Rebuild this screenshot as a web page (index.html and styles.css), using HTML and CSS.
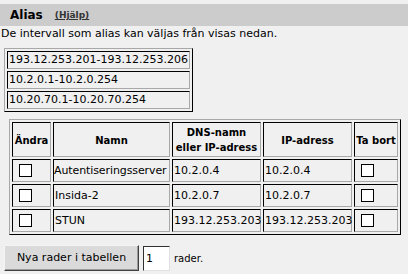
FILE: index.html
```html
<!DOCTYPE html>
<html lang="sv">
<head>
<meta charset="utf-8">
<title>Alias</title>
<link rel="stylesheet" href="styles.css">
</head>
<body>
<div class="titlebar"><span class="title">Alias</span><a class="help" href="#">(Hjälp)</a></div>
<p class="intro">De intervall som alias kan väljas från visas nedan.</p>
<table class="grid ranges">
<tr><td>193.12.253.201-193.12.253.206</td></tr>
<tr><td>10.2.0.1-10.2.0.254</td></tr>
<tr><td>10.20.70.1-10.20.70.254</td></tr>
</table>
<table class="grid aliases">
<colgroup>
<col class="c-edit"><col class="c-name"><col class="c-dns"><col class="c-ip"><col class="c-del">
</colgroup>
<tr>
<th>Ändra</th>
<th>Namn</th>
<th>DNS-namn<br>eller IP-adress</th>
<th>IP-adress</th>
<th>Ta bort</th>
</tr>
<tr>
<td><span class="cb"></span></td>
<td class="tight">Autentiseringsserver</td>
<td>10.2.0.4</td>
<td>10.2.0.4</td>
<td><span class="cb"></span></td>
</tr>
<tr>
<td><span class="cb"></span></td>
<td>Insida-2</td>
<td>10.2.0.7</td>
<td>10.2.0.7</td>
<td><span class="cb"></span></td>
</tr>
<tr>
<td><span class="cb"></span></td>
<td>STUN</td>
<td>193.12.253.203</td>
<td>193.12.253.203</td>
<td><span class="cb"></span></td>
</tr>
</table>
<div class="addrow">
<button class="btn" type="button">Nya rader i tabellen</button><span class="num">1</span><span class="unit">rader.</span>
</div>
</body>
</html>
```
FILE: styles.css
```css
html, body {
  margin: 0;
  padding: 0;
  background: #f0f0f0;
}
body {
  font-family: "DejaVu Sans", sans-serif;
  font-size: 11px;
  color: #000;
}
.titlebar {
  margin-top: 4px;
  height: 22px;
  background: #cccccc;
  display: flex;
  align-items: center;
  padding-left: 10px;
}
.title {
  font-weight: bold;
  font-size: 12px;
}
.help {
  margin-left: 12px;
  font-size: 9px;
  font-weight: bold;
  color: #333;
  text-decoration: underline;
}
.intro {
  margin: 0;
  padding-left: 1px;
  line-height: 14px;
  margin-top: 1px;
}
.grid {
  border-collapse: separate;
  border-spacing: 2px;
  border: 1px solid;
  border-color: #a8a8a8 #000 #000 #a8a8a8;
}
.grid td, .grid th {
  border: 1px solid;
  border-color: #000 #a8a8a8 #a8a8a8 #000;
  padding: 1px;
  line-height: 14px;
  text-align: left;
  white-space: nowrap;
}
.ranges {
  margin: 7px 0 0 4px;
}
.aliases {
  margin: 7px 0 0 9px;
  table-layout: fixed;
  width: 392px;
}
.c-edit { width: 39px; }
.c-name { width: 117px; }
.c-dns { width: 89px; }
.c-ip { width: 89px; }
.c-del { width: 44px; }
.aliases th {
  font-size: 10px;
  font-weight: bold;
  line-height: 15px;
  text-align: center;
  padding: 2px 0 1px;
}
.aliases td {
  padding: 1px;
  vertical-align: middle;
}
.aliases td.tight {
  padding: 1px 0;
  letter-spacing: -0.1px;
}
.cb {
  display: block;
  width: 11px;
  height: 11px;
  margin: 3px 5px;
  border: 1px solid #000;
  background: #fff;
}
.addrow {
  display: flex;
  align-items: center;
  margin: 10px 0 0 4px;
}
.btn {
  font-family: "DejaVu Sans", sans-serif;
  font-size: 11px;
  line-height: 14px;
  color: #000;
  background: #dadada;
  border: 1px solid;
  border-color: #f4f4f4 #404040 #404040 #f4f4f4;
  box-shadow: inset -1px -1px 0 #9a9a9a;
  padding: 5px 0;
  width: 135px;
  margin: 0;
}
.num {
  width: 23px;
  height: 23px;
  margin-left: 4px;
  padding-left: 2px;
  background: #fff;
  border: 1px solid;
  border-color: #303030 #e0e0e0 #e0e0e0 #303030;
  line-height: 23px;
}
.unit {
  margin-left: 4px;
  font-size: 10px;
}
```
